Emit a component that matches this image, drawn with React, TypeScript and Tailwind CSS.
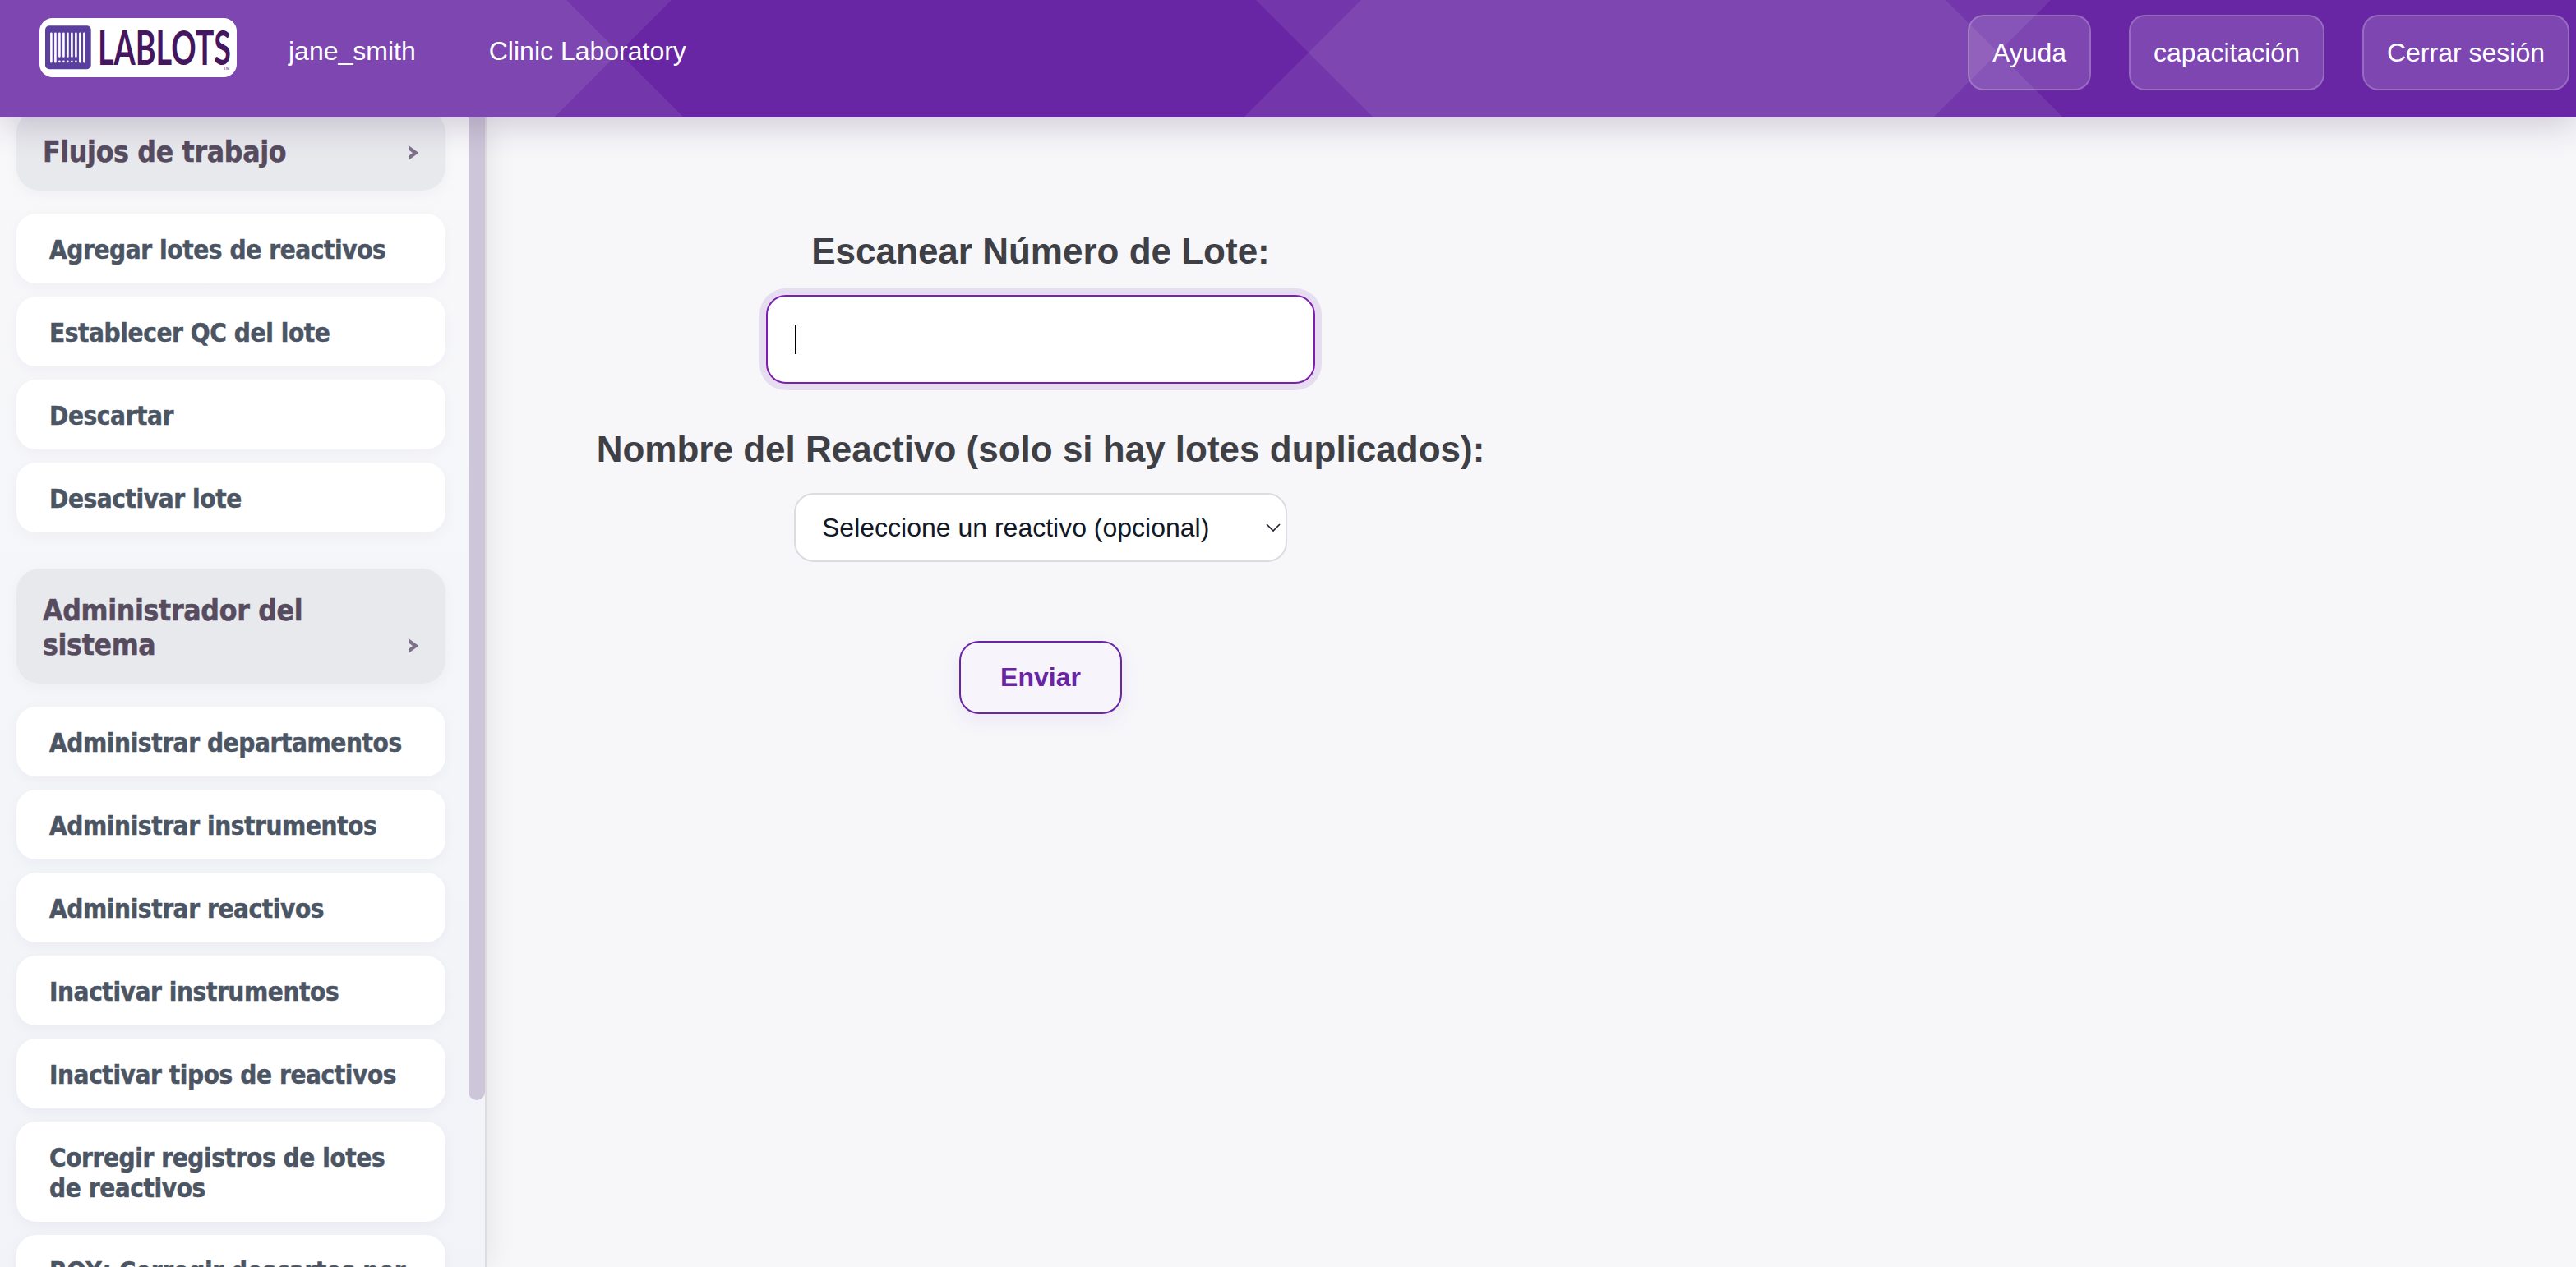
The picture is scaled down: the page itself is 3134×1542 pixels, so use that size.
import React from 'react';

interface NavSection {
    title: string;
    items: string[];
}

const sections: NavSection[] = [
    {
        title: 'Flujos de trabajo',
        items: [
            'Agregar lotes de reactivos',
            'Establecer QC del lote',
            'Descartar',
            'Desactivar lote',
        ],
    },
    {
        title: 'Administrador del sistema',
        items: [
            'Administrar departamentos',
            'Administrar instrumentos',
            'Administrar reactivos',
            'Inactivar instrumentos',
            'Inactivar tipos de reactivos',
            'Corregir registros de lotes de reactivos',
            'BOX: Corregir descartes por',
        ],
    },
];

const headerLinks = ['Ayuda', 'capacitación', 'Cerrar sesión'];

const Logo: React.FC = () => {
    const bars = [0, 1, 2, 3, 4, 5, 6, 7, 8];

    return (
        <svg width="240" height="72" viewBox="0 0 240 72" className="block shrink-0 overflow-visible">
            <rect width="240" height="72" rx="16" fill="#ffffff" />
            <rect x="7" y="9.3" width="55.7" height="53" rx="5" fill="#5b3f9e" />
            {bars.map((i) => {
                const x = 14.4 + i * 5;
                const short = i > 1 && i < 7;
                return (
                    <g key={i} stroke="#ffffff" strokeWidth="2.6" strokeLinecap="round">
                        <line x1={x} y1="18.8" x2={x} y2={short ? 46.5 : 53.2} />
                        {short && <line x1={x} y1="52.8" x2={x} y2="53" />}
                    </g>
                );
            })}
            <text
                x="71"
                y="56.5"
                fontSize="57"
                fontWeight="700"
                fill="#451660"
                textLength="162"
                lengthAdjust="spacingAndGlyphs"
                className="font-['Lato',sans-serif]"
            >
                LABLOTS
            </text>
            <text x="224" y="62.5" fontSize="5" fill="#451660" className="font-['Liberation_Sans',sans-serif]">
                TM
            </text>
        </svg>
    );
};

const Header: React.FC = () => {
    return (
        <header className="relative z-10 h-[143px] bg-[#6826a4] shadow-[0_8px_40px_rgba(40,15,65,0.2)]">
            <svg
                width="3134"
                height="143"
                viewBox="0 0 3134 143"
                fill="#ffffff"
                fillOpacity="0.08"
                className="absolute inset-0"
            >
                <polygon points="-150,0 689,0 832,143 -7,143" />
                <polygon points="-22,0 817,0 674,143 -165,143" />
                <polygon points="1528,0 2367,0 2510,143 1671,143" />
                <polygon points="1656,0 2495,0 2352,143 1513,143" />
            </svg>
            <div className="relative flex items-start justify-between pl-12 pr-2 text-[32px] leading-[36px] text-white">
                <div className="flex pt-[22px]">
                    <Logo />
                    <span className="ml-[63px] mt-[22px]">jane_smith</span>
                    <span className="ml-[89px] mt-[22px]">Clinic Laboratory</span>
                </div>
                <nav className="flex gap-[46px] pt-[18px]">
                    {headerLinks.map((label) => (
                        <a
                            key={label}
                            className="flex h-[92px] items-center rounded-[20px] border-2 border-white/20 bg-white/15 px-7"
                        >
                            {label}
                        </a>
                    ))}
                </nav>
            </div>
        </header>
    );
};

const Sidebar: React.FC = () => {
    return (
        <aside className="flex w-[592px] shrink-0 justify-between border-r-2 border-[#dddcdf] bg-linear-to-b from-[#f8f8fa] to-[#f1f3f8] font-['DejaVu_Sans_Condensed','DejaVu_Sans',sans-serif] font-bold shadow-[4px_0_32px_rgba(0,0,0,0.08)] [-webkit-text-stroke:0.5px]">
            <div className="-mt-[9px] ml-5 flex w-[522px] flex-col gap-11">
                {sections.map(({ title, items }) => (
                    <section key={title} className="flex flex-col gap-4">
                        <h3 className="mb-3 flex items-end justify-between rounded-[28px] bg-[#e8e9ed] pb-[26px] pl-8 pr-[34px] pt-[30px] text-[35.2px] leading-[42px] tracking-[-0.3px] text-[#574b60] shadow-[0_4px_16px_rgba(50,20,90,0.04)]">
                            <span className="w-[360px]">{title}</span>
                            <svg width="11" height="18" viewBox="0 0 11 18" className="mb-[11px]">
                                <path d="M0 0 L11 8 V10 L0 18 V12.8 L5 9 L0 5.2 Z" fill="#7d7089" />
                            </svg>
                        </h3>
                        {items.map((item) => (
                            <a
                                key={item}
                                className="rounded-3xl bg-white px-10 pb-[22px] pt-[26px] text-[31.2px] leading-[37px] tracking-[-0.4px] text-[#4b5563] shadow-[0_4px_16px_rgba(50,20,90,0.04)]"
                            >
                                {item}
                            </a>
                        ))}
                    </section>
                ))}
            </div>
            <div className="h-[1196px] w-5 rounded-b-[10px] bg-[#cdc5d8]" />
        </aside>
    );
};

const ScanForm: React.FC = () => {
    return (
        <form className="flex w-[1348px] flex-col items-center text-[#3f3f46]">
            <label className="mt-[137px] text-[44px] font-bold leading-[52px]">
                Escanear Número de Lote:
            </label>
            <div className="mt-[27px] flex h-[108px] w-[668px] items-center rounded-3xl border-2 border-[#7b1fae] bg-white pl-[33px] shadow-[0_0_0_8px_#e6ddf0]">
                <div className="h-9 w-[2px] bg-black" />
            </div>
            <label className="mt-[54px] text-[44px] font-bold leading-[52px]">
                Nombre del Reactivo (solo si hay lotes duplicados):
            </label>
            <div className="mt-[27px] flex h-[84px] w-[600px] items-center justify-between rounded-3xl border-2 border-[#d9dce1] bg-white pl-8 pr-[6px] text-[32px] text-[#111827]">
                <span>Seleccione un reactivo (opcional)</span>
                <svg width="18" height="10" viewBox="0 0 18 10" fill="none" stroke="#1f2430" strokeWidth="1.7">
                    <path d="M1 1 L9 9 L17 1" />
                </svg>
            </div>
            <button className="mt-24 h-[89px] w-[198px] rounded-3xl border-2 border-[#6826a4] bg-[#f7f4fc] pb-[2px] text-[32px] font-bold text-[#6826a4] shadow-[0_8px_24px_rgba(104,38,164,0.08)]">
                Enviar
            </button>
        </form>
    );
};

const App: React.FC = () => {
    return (
        <div className="flex h-[1542px] w-[3134px] flex-col overflow-hidden bg-[#f7f7fa] font-['Liberation_Sans',Arial,sans-serif]">
            <Header />
            <div className="flex h-[1399px] overflow-hidden">
                <Sidebar />
                <ScanForm />
            </div>
        </div>
    );
};

export default App;
